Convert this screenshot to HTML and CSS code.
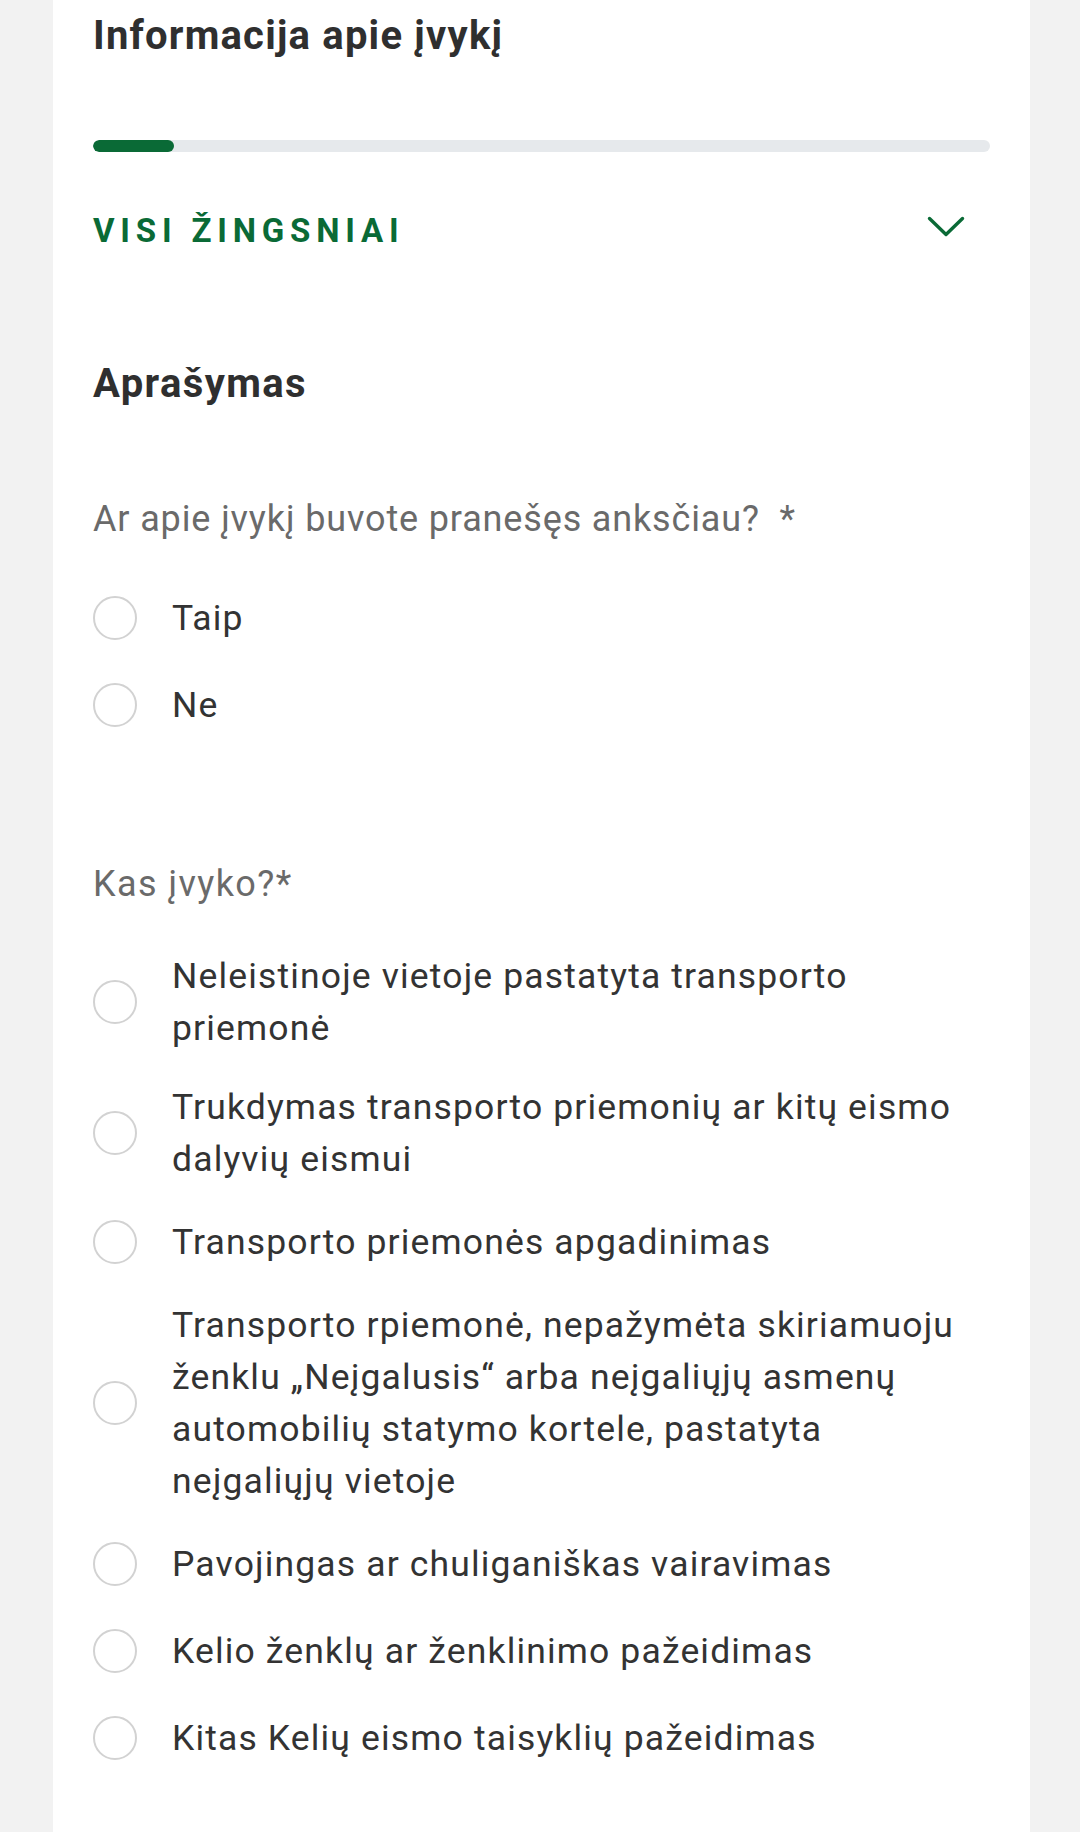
FILE: index.html
```html
<!DOCTYPE html>
<html lang="lt">
<head>
<meta charset="utf-8">
<title>Informacija apie įvykį</title>
<link rel="stylesheet" href="styles.css">
</head>
<body>
<main class="card">
  <h1 class="title">Informacija apie įvykį</h1>
  <div class="progress"><div class="progress-fill" style="width: 81px"></div></div>
  <div class="steps">
    <span class="steps-label">VISI ŽINGSNIAI</span>
    <svg class="chevron" width="38" height="22" viewBox="0 0 38 22"><polyline points="2.5,2.5 19,18.5 35.5,2.5" fill="none" stroke="#0a6a36" stroke-width="3.4" stroke-linecap="round" stroke-linejoin="round"/></svg>
  </div>
  <h2 class="section">Aprašymas</h2>

  <p class="question">Ar apie įvykį buvote pranešęs anksčiau?&nbsp; *</p>
  <div class="options options-first">
    <label class="option"><span class="radio"></span><span class="option-text">Taip</span></label>
    <label class="option"><span class="radio"></span><span class="option-text">Ne</span></label>
  </div>

  <p class="question question-second">Kas įvyko?*</p>
  <div class="options options-second">
    <label class="option"><span class="radio"></span><span class="option-text">Neleistinoje vietoje pastatyta transporto priemonė</span></label>
    <label class="option"><span class="radio"></span><span class="option-text">Trukdymas transporto priemonių ar kitų eismo dalyvių eismui</span></label>
    <label class="option"><span class="radio"></span><span class="option-text">Transporto priemonės apgadinimas</span></label>
    <label class="option"><span class="radio"></span><span class="option-text">Transporto rpiemonė, nepažymėta skiriamuoju ženklu „Neįgalusis“ arba neįgaliųjų asmenų automobilių statymo kortele, pastatyta neįgaliųjų vietoje</span></label>
    <label class="option"><span class="radio"></span><span class="option-text">Pavojingas ar chuliganiškas vairavimas</span></label>
    <label class="option"><span class="radio"></span><span class="option-text">Kelio ženklų ar ženklinimo pažeidimas</span></label>
    <label class="option"><span class="radio"></span><span class="option-text">Kitas Kelių eismo taisyklių pažeidimas</span></label>
  </div>
</main>
</body>
</html>
```

FILE: styles.css
```css
html, body {
  margin: 0;
  padding: 0;
}
body {
  background: #f2f2f2;
  font-family: Roboto, "Noto Sans", "Liberation Sans", sans-serif;
  width: 1080px;
  height: 1832px;
  overflow: hidden;
}
.card {
  margin-left: 53px;
  width: 977px;
  min-height: 1832px;
  box-sizing: border-box;
  background: #ffffff;
  padding: 12px 40px 0 40px;
}
.title {
  margin: 0;
  font-size: 40px;
  line-height: 48px;
  font-weight: 700;
  letter-spacing: 1.2px;
  color: #2f2f2f;
}
.progress {
  margin-top: 80px;
  height: 12px;
  border-radius: 6px;
  background: #e6e9ec;
  overflow: hidden;
}
.progress-fill {
  height: 100%;
  background: #0a6a36;
  border-radius: 6px;
}
.steps {
  margin-top: 55px;
  height: 48px;
  display: flex;
  align-items: center;
  justify-content: space-between;
}
.steps-label {
  font-size: 33px;
  line-height: 48px;
  font-weight: 700;
  letter-spacing: 5.8px;
  color: #0a6a36;
}
.chevron {
  margin-right: 25px;
  margin-bottom: 8px;
}
.section {
  margin: 105px 0 0 0;
  font-size: 40px;
  line-height: 48px;
  font-weight: 700;
  letter-spacing: 1.4px;
  color: #2f2f2f;
}
.question {
  margin: 87px 0 0 0;
  font-size: 36px;
  line-height: 48px;
  font-weight: 400;
  letter-spacing: 0.85px;
  color: #6a6a6a;
}
.question-second {
  margin-top: 125px;
  letter-spacing: 1.4px;
}
.options {
  display: flex;
  flex-direction: column;
  gap: 27px;
}
.options-first {
  margin-top: 45px;
}
.options-second {
  margin-top: 42px;
}
.option {
  display: flex;
  align-items: center;
  min-height: 60px;
}
.radio {
  flex: none;
  width: 40px;
  height: 40px;
  border: 2px solid #d2d2d2;
  border-radius: 50%;
  margin-right: 35px;
}
.option-text {
  font-size: 35.5px;
  line-height: 52px;
  letter-spacing: 1.15px;
  color: #333333;
  max-width: 810px;
}
```
